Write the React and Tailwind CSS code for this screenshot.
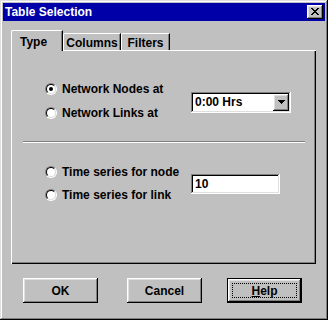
import React from 'react';

// Win95 style bevels
const raised = 'shadow-[inset_-1px_-1px_#000,inset_1px_1px_#fff,inset_-2px_-2px_#808080,inset_2px_2px_#dfdfdf]';
const sunken = 'shadow-[inset_-1px_-1px_#fff,inset_1px_1px_#808080,inset_-2px_-2px_#dfdfdf,inset_2px_2px_#000]';

function Radio({ checked }) {
  return (
    <div className="w-[12px] h-[12px] rounded-full border border-t-[#808080] border-l-[#808080] border-b-white border-r-white">
      <div className="w-full h-full rounded-full border border-t-black border-l-black border-b-[#dfdfdf] border-r-[#dfdfdf] bg-white flex items-center justify-center">
        {checked && <div className="w-[4px] h-[4px] rounded-full bg-black" />}
      </div>
    </div>
  );
}

function RadioRow({ label, checked, h = 'h-[24px]' }) {
  return (
    <div className={`flex items-center gap-[5px] ${h}`}>
      <Radio checked={checked} />
      <span>{label}</span>
    </div>
  );
}

function CloseGlyph() {
  const rows = ['##....##', '.##..##.', '..####..', '...##...', '..####..', '.##..##.', '##....##'];
  return (
    <svg width="8" height="7" viewBox="0 0 8 7" shapeRendering="crispEdges">
      {rows.map((r, y) =>
        r.split('').map((c, x) => (c === '#' ? <rect key={`${x}-${y}`} x={x} y={y} width="1" height="1" fill="#000" /> : null))
      )}
    </svg>
  );
}

function Arrow() {
  return (
    <svg width="7" height="4" viewBox="0 0 7 4" shapeRendering="crispEdges">
      <rect x="0" y="0" width="7" height="1" fill="#000" />
      <rect x="1" y="1" width="5" height="1" fill="#000" />
      <rect x="2" y="2" width="3" height="1" fill="#000" />
      <rect x="3" y="3" width="1" height="1" fill="#000" />
    </svg>
  );
}

function Button({ children, isDefault }) {
  if (isDefault) {
    return (
      <div className="w-[75px] h-[25px] border border-black">
        <div className={`w-full h-full bg-[#c0c0c0] ${raised} p-[4px]`}>
          <div className="w-full h-full border border-dotted border-black flex items-center justify-center">
            {children}
          </div>
        </div>
      </div>
    );
  }
  return (
    <div className={`w-[75px] h-[25px] bg-[#c0c0c0] ${raised} flex items-center justify-center`}>
      {children}
    </div>
  );
}

export default function App() {
  return (
    <div className="w-[328px] h-[320px] bg-[#c0c0c0] p-[3px] shadow-[inset_-1px_-1px_#000,inset_1px_1px_#dfdfdf,inset_-2px_-2px_#808080,inset_2px_2px_#fff] font-['Liberation_Sans',Arial,sans-serif] font-bold text-[12px] leading-none text-black">
      {/* title bar */}
      <div className="h-[18px] bg-[#0000a8] flex items-center justify-between pl-[2px] pr-[2px]">
        <span className="text-white">Table Selection</span>
        <div className={`w-[16px] h-[14px] bg-[#c0c0c0] ${raised} flex items-center justify-center pb-[1px]`}>
          <CloseGlyph />
        </div>
      </div>

      {/* tabs */}
      <div className="relative z-10 mt-[9px] ml-[8px] flex items-end h-[20px]">
        <div className="w-[52px] h-[21px] -mb-[1px] bg-[#c0c0c0] border-l border-t border-white border-r border-r-black rounded-tl-[2px] shadow-[inset_-1px_0_#808080] flex items-start pt-[5px] pl-[8px]">
          Type
        </div>
        <div className="w-[58px] h-[17px] border-l border-t border-white border-r border-r-black rounded-tl-[2px] shadow-[inset_-1px_0_#808080] flex items-start justify-center pt-[3px]">
          Columns
        </div>
        <div className="w-[49px] h-[17px] border-l border-t border-white border-r border-r-black rounded-tl-[2px] shadow-[inset_-1px_0_#808080] flex items-start justify-center pt-[3px]">
          Filters
        </div>
      </div>

      {/* panel */}
      <div className="ml-[8px] w-[305px] h-[214px] shadow-[inset_1px_1px_#fff,inset_-1px_-1px_#000,inset_-2px_-2px_#808080] pt-[27px]">
        <div className="flex items-center pl-[34px]">
          <div className="w-[146px]">
            <RadioRow label="Network Nodes at" checked />
            <RadioRow label="Network Links at" />
          </div>
          <div className={`w-[100px] h-[21px] bg-white ${sunken} p-[2px] flex items-center mt-[2px]`}>
            <span className="flex-1 pl-[2px]">0:00 Hrs</span>
            <div className={`w-[16px] h-full bg-[#c0c0c0] ${raised} flex items-center justify-center`}>
              <Arrow />
            </div>
          </div>
        </div>

        <div className="mt-[16px] ml-[12px] w-[282px] h-[2px] border-t border-t-[#808080] border-b border-b-white" />

        <div className="mt-[17px] flex items-center pl-[34px]">
          <div className="w-[146px]">
            <RadioRow label="Time series for node" h="h-[23px]" />
            <RadioRow label="Time series for link" h="h-[23px]" />
          </div>
          <div className={`w-[89px] h-[20px] bg-white ${sunken} flex items-center pl-[4px] mt-[2px]`}>
            10
          </div>
        </div>
      </div>

      {/* buttons */}
      <div className="mt-[14px] ml-[20px] flex">
        <Button>OK</Button>
        <div className="ml-[29px]">
          <Button>Cancel</Button>
        </div>
        <div className="ml-[25px]">
          <Button isDefault>
            <span><span className="underline">H</span>elp</span>
          </Button>
        </div>
      </div>
    </div>
  );
}
